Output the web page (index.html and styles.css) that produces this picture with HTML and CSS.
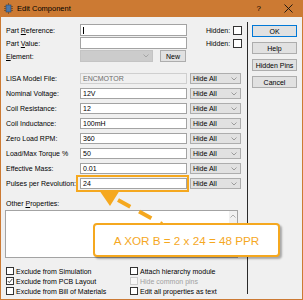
FILE: index.html
```html
<!DOCTYPE html>
<html lang="en">
<head>
    <meta charset="UTF-8">
    <title>Edit Component</title>
    <link rel="stylesheet" href="styles.css">
</head>
<body>
<div class="window">
    <div class="titlebar">
        <svg class="app-icon" width="9" height="11" viewBox="0 0 9 11">
            <rect x="2" y="2" width="5" height="7" fill="#4f78a8" stroke="#23456d" stroke-width="0.6"/>
            <path d="M0 3.5h2M0 5.5h2M0 7.5h2M7 3.5h2M7 5.5h2M7 7.5h2M4.5 0v2M4.5 9v2" stroke="#6b4a2a" stroke-width="0.8"/>
        </svg>
        <span class="title">Edit Component</span>
        <span class="help">?</span>
        <svg class="close" width="9" height="9" viewBox="0 0 9 9">
            <path d="M0.5 0.5L8.5 8.5M8.5 0.5L0.5 8.5" stroke="#111" stroke-width="0.9"/>
        </svg>
    </div>
    <div class="content">
        <div class="fields">
            <div class="row top-row first">
                <label class="lbl">Part <u>R</u>eference:</label>
                <div class="box"><span class="caret"></span></div>
                <span class="hidden-lbl">Hidden:</span><span class="check"></span>
            </div>
            <div class="row top-row">
                <label class="lbl">Part <u>V</u>alue:</label>
                <div class="box"></div>
                <span class="hidden-lbl">Hidden:</span><span class="check"></span>
            </div>
            <div class="row top-row">
                <label class="lbl"><u>E</u>lement:</label>
                <div class="element-select">
                    <svg class="chev" width="6" height="4" viewBox="0 0 6 4"><polyline points="0.5,0.5 3,3 5.5,0.5" fill="none" stroke="#9a9a9a" stroke-width="0.8"/></svg>
                </div>
                <div class="btn new-btn">New</div>
            </div>

            <div class="props">
                <div class="row prop-row">
                    <label class="lbl">LISA Model File:</label>
                    <div class="box disabled">ENCMOTOR</div>
                    <div class="select">Hide All<svg class="chev" width="6" height="4" viewBox="0 0 6 4"><polyline points="0.5,0.5 3,3 5.5,0.5" fill="none" stroke="#8a8a8a" stroke-width="0.8"/></svg></div>
                </div>
                <div class="row prop-row">
                    <label class="lbl">Nominal Voltage:</label>
                    <div class="box">12V</div>
                    <div class="select">Hide All<svg class="chev" width="6" height="4" viewBox="0 0 6 4"><polyline points="0.5,0.5 3,3 5.5,0.5" fill="none" stroke="#8a8a8a" stroke-width="0.8"/></svg></div>
                </div>
                <div class="row prop-row">
                    <label class="lbl">Coil Resistance:</label>
                    <div class="box">12</div>
                    <div class="select">Hide All<svg class="chev" width="6" height="4" viewBox="0 0 6 4"><polyline points="0.5,0.5 3,3 5.5,0.5" fill="none" stroke="#8a8a8a" stroke-width="0.8"/></svg></div>
                </div>
                <div class="row prop-row">
                    <label class="lbl">Coil Inductance:</label>
                    <div class="box">100mH</div>
                    <div class="select">Hide All<svg class="chev" width="6" height="4" viewBox="0 0 6 4"><polyline points="0.5,0.5 3,3 5.5,0.5" fill="none" stroke="#8a8a8a" stroke-width="0.8"/></svg></div>
                </div>
                <div class="row prop-row">
                    <label class="lbl">Zero Load RPM:</label>
                    <div class="box">360</div>
                    <div class="select">Hide All<svg class="chev" width="6" height="4" viewBox="0 0 6 4"><polyline points="0.5,0.5 3,3 5.5,0.5" fill="none" stroke="#8a8a8a" stroke-width="0.8"/></svg></div>
                </div>
                <div class="row prop-row">
                    <label class="lbl">Load/Max Torque %</label>
                    <div class="box">50</div>
                    <div class="select">Hide All<svg class="chev" width="6" height="4" viewBox="0 0 6 4"><polyline points="0.5,0.5 3,3 5.5,0.5" fill="none" stroke="#8a8a8a" stroke-width="0.8"/></svg></div>
                </div>
                <div class="row prop-row">
                    <label class="lbl">Effective Mass:</label>
                    <div class="box">0.01</div>
                    <div class="select">Hide All<svg class="chev" width="6" height="4" viewBox="0 0 6 4"><polyline points="0.5,0.5 3,3 5.5,0.5" fill="none" stroke="#8a8a8a" stroke-width="0.8"/></svg></div>
                </div>
                <div class="row prop-row">
                    <label class="lbl">Pulses per Revolution:</label>
                    <div class="box">24</div>
                    <div class="select">Hide All<svg class="chev" width="6" height="4" viewBox="0 0 6 4"><polyline points="0.5,0.5 3,3 5.5,0.5" fill="none" stroke="#8a8a8a" stroke-width="0.8"/></svg></div>
                </div>
            </div>

            <div class="other-lbl">Other <u>P</u>roperties:</div>
            <div class="other-box">
                <div class="scroll">
                    <svg width="6" height="4" viewBox="0 0 6 4"><polyline points="0.5,3.5 3,1 5.5,3.5" fill="none" stroke="#9a9a9a" stroke-width="0.8"/></svg>
                </div>
            </div>

            <div class="options">
                <div class="opt"><span class="check"></span>Exclude from Simulation</div>
                <div class="opt"><span class="check"></span>Attach hierarchy module</div>
                <div class="opt"><span class="check checked"><svg width="6" height="6" viewBox="0 0 6 6"><polyline points="0.8,3 2.3,4.6 5.3,0.9" fill="none" stroke="#222" stroke-width="0.8"/></svg></span>Exclude from PCB Layout</div>
                <div class="opt muted"><span class="check off"></span>Hide common pins</div>
                <div class="opt"><span class="check"></span>Exclude from Bill of Materials</div>
                <div class="opt"><span class="check"></span>Edit all properties as text</div>
            </div>
        </div>

        <div class="divider"></div>

        <div class="buttons">
            <div class="btn default">OK</div>
            <div class="btn">Help</div>
            <div class="btn">Hidden Pins</div>
            <div class="btn">Cancel</div>
        </div>
    </div>

    <svg class="overlay" width="303" height="300" viewBox="0 0 303 300">
        <rect x="77" y="176" width="111" height="15" fill="none" stroke="#f5a81f" stroke-width="2"/>
        <polygon points="99,190 120,190 110,206" fill="#f5a81f"/>
        <line x1="118" y1="200" x2="162" y2="224" stroke="#f5a81f" stroke-width="4" stroke-dasharray="14 10"/>
    </svg>
    <div class="callout">A XOR B = 2 x 24 = 48 PPR</div>
</div>
</body>
</html>
```

FILE: styles.css
```css
body {
    margin: 0;
    padding: 0;
    font-family: "Liberation Sans", Arial, sans-serif;
    font-size: 7px;
    color: #000;
}

.window {
    position: relative;
    width: 303px;
    height: 300px;
    box-sizing: border-box;
    background: #f0f0f0;
    border: 1px solid #cc7a33;
    border-top: 0;
    overflow: hidden;
}

/* title bar */
.titlebar {
    height: 17px;
    background: #cc7a33;
    display: flex;
    align-items: center;
}

.app-icon {
    margin-left: 3px;
    flex: none;
}

.title {
    margin-left: 4px;
    font-size: 7.5px;
}

.help {
    margin-left: auto;
    font-size: 8px;
}

.close {
    margin-left: 23px;
    margin-right: 9px;
}

/* dialog body */
.content {
    display: flex;
    height: 282px;
}

.fields {
    width: 236px;
    padding-left: 5px;
    flex: none;
}

.row {
    display: flex;
    align-items: center;
}

.top-row {
    height: 12px;
    margin-top: 1px;
}

.top-row.first {
    margin-top: 7px;
}

.lbl {
    width: 74px;
    flex: none;
    white-space: nowrap;
}

.box {
    width: 107px;
    height: 100%;
    box-sizing: border-box;
    flex: none;
    background: #fff;
    border: 1px solid #a3a3a3;
    padding-left: 2px;
    display: flex;
    align-items: center;
}

.box.disabled {
    background: #f0f0f0;
    border-color: #cfcfcf;
    color: #6d6d6d;
}

.caret {
    width: 1px;
    height: 7px;
    background: #000;
}

.hidden-lbl {
    margin-left: 19px;
}

.check {
    width: 9px;
    height: 9px;
    box-sizing: border-box;
    border: 1px solid #333;
    background: #fff;
    flex: none;
    display: flex;
    align-items: center;
    justify-content: center;
}

.row .check {
    margin-left: 3px;
}

.element-select {
    width: 73px;
    height: 100%;
    box-sizing: border-box;
    background: #cccccc;
    border: 1px solid #c4c4c4;
    display: flex;
    align-items: center;
    justify-content: flex-end;
    padding-right: 3px;
}

.btn {
    height: 12px;
    box-sizing: border-box;
    background: #e1e1e1;
    border: 1px solid #adadad;
    display: flex;
    align-items: center;
    justify-content: center;
}

.new-btn {
    width: 26px;
    margin-left: 7px;
}

.props {
    margin-top: 11px;
    display: flex;
    flex-direction: column;
    gap: 4px;
}

.prop-row {
    height: 11px;
}

.select {
    width: 51px;
    height: 100%;
    margin-left: 3px;
    box-sizing: border-box;
    background: #e1e1e1;
    border: 1px solid #adadad;
    padding-left: 2px;
    padding-right: 3px;
    display: flex;
    align-items: center;
    justify-content: space-between;
}

.other-lbl {
    margin-top: 10px;
    height: 10px;
    line-height: 10px;
}

.other-box {
    margin-left: -1px;
    margin-top: 1px;
    width: 233px;
    height: 48px;
    box-sizing: border-box;
    background: #fff;
    border: 1px solid #a3a3a3;
    display: flex;
    justify-content: flex-end;
}

.scroll {
    width: 8px;
    background: #f0f0f0;
    display: flex;
    justify-content: center;
    padding-top: 3px;
}

.options {
    margin-top: 8px;
    display: grid;
    grid-template-columns: 124px auto;
    grid-auto-rows: 10px;
}

.opt {
    display: flex;
    align-items: center;
    white-space: nowrap;
}

.opt .check {
    width: 8px;
    height: 8px;
    margin-right: 2px;
}

.opt.muted {
    color: #a0a0a0;
}

.check.off {
    border-color: #cccccc;
    background: #f7f7f7;
}

.divider {
    width: 1px;
    height: 272px;
    margin-top: 5px;
    margin-left: 5px;
    background: #2a2a2a;
    flex: none;
}

.buttons {
    width: 45px;
    margin-left: 4px;
    margin-top: 8px;
    display: flex;
    flex-direction: column;
    gap: 5px;
}

.btn.default {
    border-color: #0078d7;
}

/* annotation drawn over the dialog */
.overlay {
    position: absolute;
    left: -1px;
    top: 0;
    pointer-events: none;
}

.callout {
    position: absolute;
    left: 92px;
    top: 223px;
    width: 187px;
    height: 34px;
    box-sizing: border-box;
    background: #fff;
    border: 2px solid #f5a81f;
    border-radius: 4px;
    box-shadow: 2px 2px 2px rgba(0, 0, 0, 0.3);
    color: #f5a81f;
    font-size: 11.7px;
    display: flex;
    align-items: center;
    justify-content: center;
}
```
